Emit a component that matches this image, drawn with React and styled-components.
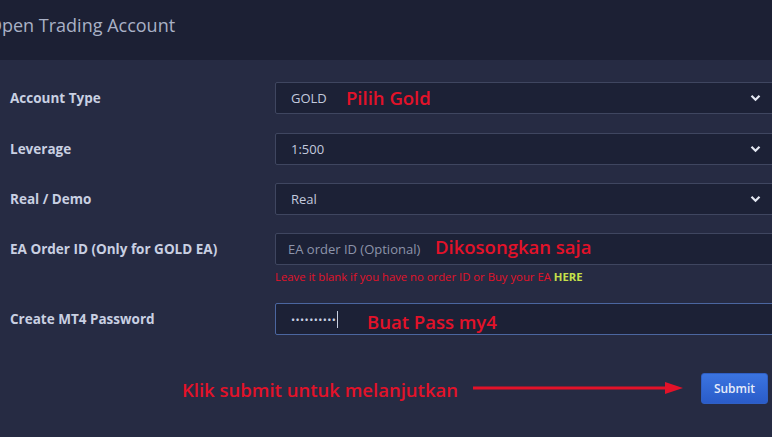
import React from 'react';
import styled, { createGlobalStyle } from 'styled-components';

const GlobalStyle = createGlobalStyle`
  html, body {
    margin: 0;
    padding: 0;
    background: #262b43;
    overflow: hidden;
  }
  * { box-sizing: border-box; }
`;

const Page = styled.div`
  width: 772px;
  height: 437px;
  overflow: hidden;
  font-family: 'Open Sans', 'Liberation Sans', sans-serif;
  background: #262b43;
`;

const Header = styled.div`
  height: 60px;
  background: #1c2034;
  display: flex;
  align-items: center;
  padding-bottom: 10px;
  overflow: hidden;
`;

const Title = styled.h1`
  margin: 0 0 0 -12px;
  font-size: 18px;
  font-weight: 400;
  color: #a9b1c6;
  white-space: nowrap;
`;

const Form = styled.div`
  width: 800px;
  padding: 22px 0 0 10px;
  display: flex;
  flex-direction: column;
`;

const Row = styled.div`
  display: grid;
  grid-template-columns: 265px 1fr;
  align-items: start;
  margin-bottom: ${(p) => p.gap ?? 18}px;
`;

const Label = styled.label`
  font-size: 13.5px;
  font-weight: 700;
  color: #c9d0e2;
  line-height: 32px;
`;

const FieldWrap = styled.div`
  position: relative;
`;

const Box = styled.div`
  height: 32px;
  background: #1c2136;
  border: 1px solid ${(p) => (p.focused ? '#4b66a0' : '#3f4660')};
  border-radius: 2px;
  display: flex;
  align-items: center;
  padding: 0 13px 0 ${(p) => (p.placeholder ? 12 : 15)}px;
  font-size: 13px;
  color: ${(p) => (p.placeholder ? '#8d94aa' : '#c3cade')};
`;

const Value = styled.span`
  flex: 1;
  display: flex;
  align-items: center;
`;

const Chevron = styled.svg`
  width: 11px;
  height: 8px;
  margin-right: 25px;
`;

const Note = styled.span`
  position: absolute;
  left: ${(p) => p.x}px;
  top: ${(p) => p.y}px;
  color: #e31229;
  font-size: 18.5px;
  font-weight: 600;
  white-space: nowrap;
  font-family: 'Open Sans', 'Liberation Sans', sans-serif;
`;

const Help = styled.div`
  font-size: 11.3px;
  color: #e31229;
  margin-top: 4px;
  white-space: nowrap;
`;

const Here = styled.span`
  color: #c6e04a;
  font-weight: 700;
`;

const Dots = styled.span`
  letter-spacing: 0.4px;
  font-size: 11px;
  color: #c9d0e2;
`;

const Caret = styled.span`
  display: inline-block;
  width: 1px;
  height: 17px;
  background: #c9d0e2;
  margin-left: 1px;
`;

const Footer = styled.div`
  position: relative;
  display: flex;
  justify-content: flex-end;
  padding-right: 32px;
  margin-top: 38px;
`;

const Submit = styled.button`
  width: 67px;
  height: 31px;
  border: 1px solid #2f5fc4;
  border-radius: 3px;
  background: linear-gradient(#3b74e0, #2a5cc9);
  color: #e6ecfa;
  font-family: 'Open Sans', 'Liberation Sans', sans-serif;
  font-size: 12px;
  font-weight: 600;
`;

const Arrow = styled.svg`
  position: absolute;
  left: 461px;
  top: 8px;
`;

const ChevronIcon = () => (
  <Chevron viewBox="0 0 11 8">
    <path d="M1.5 1.8 L5.5 5.8 L9.5 1.8" stroke="#e4e8f2" strokeWidth="2.2" fill="none" />
  </Chevron>
);

const SelectRow = ({ label, value, note, gap }) => (
  <Row gap={gap}>
    <Label>{label}</Label>
    <FieldWrap>
      <Box>
        <Value>{value}</Value>
        <ChevronIcon />
      </Box>
      {note && <Note x={note.x} y={note.y}>{note.text}</Note>}
    </FieldWrap>
  </Row>
);

export default function App() {
  return (
    <Page>
      <GlobalStyle />
      <Header>
        <Title>Open Trading Account</Title>
      </Header>
      <Form>
        <SelectRow label="Account Type" value="GOLD" gap={19} note={{ text: 'Pilih Gold', x: 71, y: 3 }} />
        <SelectRow label="Leverage" value="1:500" />
        <SelectRow label="Real / Demo" value="Real" />
        <Row gap={19}>
          <Label>EA Order ID (Only for GOLD EA)</Label>
          <FieldWrap>
            <Box placeholder="true">
              <Value>EA order ID (Optional)</Value>
            </Box>
            <Note x={160} y={1}>Dikosongkan saja</Note>
            <Help>
              Leave it blank if you have no order ID or Buy your EA <Here>HERE</Here>
            </Help>
          </FieldWrap>
        </Row>
        <Row gap={0}>
          <Label>Create MT4 Password</Label>
          <FieldWrap>
            <Box focused>
              <Value>
                <Dots>••••••••••</Dots>
                <Caret />
              </Value>
            </Box>
            <Note x={92} y={6}>Buat Pass my4</Note>
          </FieldWrap>
        </Row>
        <Footer>
          <Note x={172} y={4}>Klik submit untuk melanjutkan</Note>
          <Arrow width="220" height="14" viewBox="0 0 220 14">
            <line x1="2" y1="7" x2="196" y2="7" stroke="#e31229" strokeWidth="3" />
            <polygon points="194,1 212,7 194,13" fill="#e31229" />
          </Arrow>
          <Submit>Submit</Submit>
        </Footer>
      </Form>
    </Page>
  );
}
